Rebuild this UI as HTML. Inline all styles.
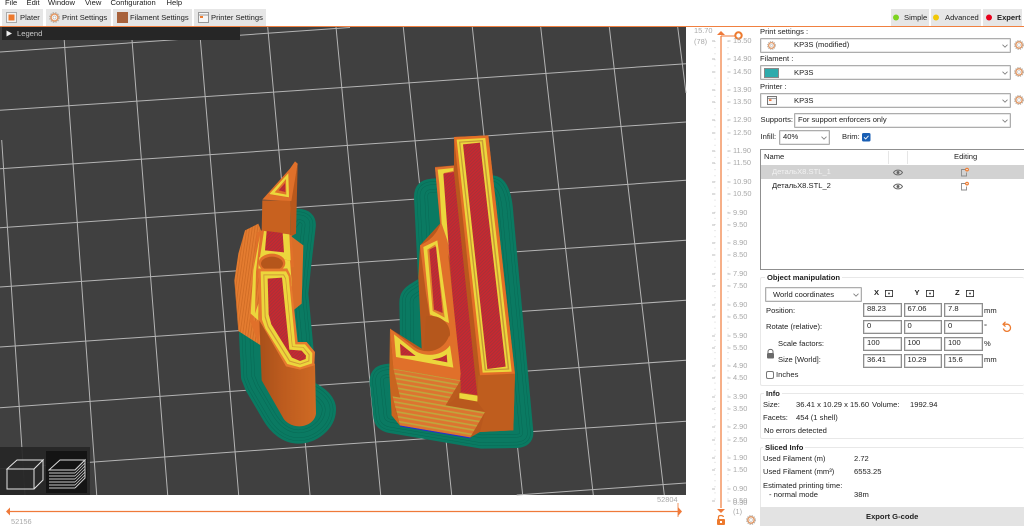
<!DOCTYPE html>
<html><head><meta charset="utf-8"><style>
html,body{margin:0;padding:0;background:#fff}
#r{position:relative;width:1024px;height:526px;overflow:hidden;background:#fff;font-family:"Liberation Sans","Noto Sans CJK SC",sans-serif;font-size:7.6px;color:#222;filter:blur(.3px)}
.t{position:absolute;height:10px;line-height:10px;white-space:nowrap}
.b{font-weight:bold}
.g{color:#a8a8a8;font-size:7.4px}
.box{position:absolute;background:#fff;border:1px solid #adadad;box-sizing:border-box;box-shadow:inset 0 0 0 .5px #d0d0d0;border-radius:1px}
.inp{position:absolute;background:#fff;border:1px solid #8e8e8e;box-sizing:border-box;height:14px;width:38.5px;line-height:10px;padding-left:3px;box-shadow:inset 0 0 0 .5px #bbb}
.tab{position:absolute;top:9px;height:17px;background:#e6e6e6}
.grp{position:absolute;border:1px solid #e8e8e8;border-right:0;box-sizing:border-box;border-radius:2px}
.ttl{position:absolute;background:#fff;height:10px;line-height:10px;padding:0 2px;font-weight:bold;white-space:nowrap}
svg{position:absolute;overflow:visible}
</style></head><body><div id="r">

<svg style="left:0;top:0;width:0;height:0"><defs>
<symbol id="gear" viewBox="0 0 10 10"><circle cx="5" cy="5" r="3.2" fill="#fff" stroke="#e59a66" stroke-width="1.5"/><circle cx="5" cy="5" r="4.3" fill="none" stroke="#b5b0aa" stroke-width="1.2" stroke-dasharray="1.3 1"/><circle cx="5" cy="5" r="1.4" fill="#fff" stroke="#aaa" stroke-width=".5"/></symbol>
<symbol id="chev" viewBox="0 0 6 4"><path d="M.5 .7L3 3.2L5.5 .7" fill="none" stroke="#7a7a7a" stroke-width=".8"/></symbol>
<symbol id="eye" viewBox="0 0 10 7"><path d="M.5 3.5C2.5 .3 7.5 .3 9.5 3.5C7.5 6.7 2.5 6.7 .5 3.5Z" fill="none" stroke="#666" stroke-width="1"/><circle cx="5" cy="3.5" r="1.5" fill="#666"/></symbol>
<symbol id="edit" viewBox="0 0 10 10"><path d="M6 2.5H1.5V9H6.5V5.5" fill="none" stroke="#8a8a8a" stroke-width=".9"/><circle cx="7" cy="2.6" r="1.9" fill="#ed7a2e"/><circle cx="7" cy="2.6" r=".7" fill="#fff"/></symbol>
<symbol id="cb" viewBox="0 0 8 7"><rect x=".5" y=".5" width="7" height="6" fill="none" stroke="#444" stroke-width=".9"/><path d="M0 2V0H2M6 0H8V2M8 5V7H6M2 7H0V5" fill="none" stroke="#222" stroke-width=".6"/><rect x="3.2" y="2.7" width="1.6" height="1.6" fill="#333"/></symbol>
<pattern id="hatch" width="7" height="7" patternUnits="userSpaceOnUse" patternTransform="rotate(-45)"><rect width="7" height="7" fill="#c9282f"/><rect width="7" height="2.8" fill="#a6323a"/></pattern>
<pattern id="stairs" width="10" height="14" patternUnits="userSpaceOnUse" patternTransform="rotate(10)"><rect width="10" height="14" fill="#dd7430"/><rect y="4" width="10" height="5" fill="#bfa63c"/></pattern>
<pattern id="steps" width="8" height="8" patternUnits="userSpaceOnUse" patternTransform="rotate(8)"><rect width="8" height="8" fill="#e47c30"/><rect width="2.5" height="8" fill="#cf6b24"/></pattern>
<linearGradient id="wall" x1="0" x2="1" y1="0" y2="0"><stop offset="0" stop-color="#a8501a"/><stop offset=".4" stop-color="#bc5b1e"/><stop offset="1" stop-color="#cf6a24"/></linearGradient>
<path id="b1" d="M890 570C915 570 925 580 922 600L908 720L900 800L915 960L923 1085C960 1100 985 1125 983 1150C981 1190 940 1225 895 1225C860 1225 830 1200 810 1165L760 1080L748 1050L742 920L800 700Z"/>
<path id="b2" d="M245 480C225 482 217 490 217 510L230 770L190 795C175 805 173 815 173 830L177 1030L115 1035C92 1037 83 1045 84 1065L95 1170C97 1182 105 1190 120 1193L395 1240L500 1238C518 1237 526 1230 525 1215L465 560C462 510 450 470 425 470Z"/>
</defs></svg>

<!-- menu -->
<div class="t" style="left:5px;top:-2px">File</div><div class="t" style="left:26.5px;top:-2px">Edit</div><div class="t" style="left:48px;top:-2px">Window</div><div class="t" style="left:85px;top:-2px">View</div><div class="t" style="left:110.5px;top:-2px">Configuration</div><div class="t" style="left:166.5px;top:-2px">Help</div>

<!-- tabs -->
<div class="tab" style="left:2px;width:41px"></div><div class="tab" style="left:46px;width:65px"></div><div class="tab" style="left:113px;width:79px"></div><div class="tab" style="left:194px;width:72px"></div>
<svg style="left:6px;top:12px" width="11" height="11"><rect x=".5" y=".5" width="10" height="10" fill="#f3f3f3" stroke="#aaa"/><rect x="2.5" y="2.5" width="6" height="6" fill="#ed7a2e"/></svg>
<svg style="left:49px;top:12px" width="11" height="11"><use href="#gear" width="11" height="11"/></svg>
<svg style="left:117px;top:12px" width="11" height="11"><rect width="11" height="11" fill="#a8623c"/></svg>
<svg style="left:198px;top:12px" width="11" height="11"><rect x=".5" y=".5" width="10" height="10" fill="#f6f6f6" stroke="#999"/><path d="M.5 3H10.5" stroke="#999"/><rect x="2" y="4" width="3" height="2" fill="#ed7a2e"/></svg>
<div class="t" style="left:20px;top:13px">Plater</div><div class="t" style="left:62px;top:13px">Print Settings</div><div class="t" style="left:130px;top:13px">Filament Settings</div><div class="t" style="left:211px;top:13px">Printer Settings</div>

<div class="tab" style="left:891px;width:38px"></div><div class="tab" style="left:931px;width:50px"></div><div class="tab" style="left:983px;width:39px"></div>
<svg style="left:892px;top:13px" width="130" height="10"><circle cx="4" cy="4.5" r="3" fill="#7ed321"/><circle cx="44" cy="4.5" r="3" fill="#f0c808"/><circle cx="97" cy="4.5" r="3" fill="#e8001c"/></svg>
<div class="t" style="left:904px;top:13px">Simple</div><div class="t" style="left:945px;top:13px">Advanced</div><div class="t b" style="left:997px;top:13px">Expert</div>
<div style="position:absolute;left:0;top:26px;width:1024px;height:1px;background:#f08040"></div>

<!-- 3D view -->
<svg style="left:0;top:27px" width="686" height="468" viewBox="0 27 686 468">
<rect x="0" y="27" width="686" height="468" fill="#404040"/>
<g stroke="#b4b4b4" stroke-width="1" fill="none">
<path d="M0 52L350 27.5M0 110.3L350 87L686 63.7M0 168.7L350 145.3L686 122M0 227.7L350 203.7L686 180.3M0 287L350 263L686 240.3M0 347L350 323L686 300.3M0 407.7L350 383L686 360.3M0 468.7L350 443.7L686 421.3M516.7 495L686 483"/>
<path d="M1.7 140L25 495M63.3 27L96.7 495M131 27L167.7 495M199.3 27L238.7 495M267.7 27L310 495M336 27L380.7 495M403.3 27L451.7 495M472.3 27L522.7 495M540.7 27L593.3 495M609.3 27L664.3 495M677.7 27L686 93"/>
</g>
<!-- LEFT OBJECT -->
<g transform="translate(0,27) scale(.33333)">
<g stroke-linejoin="round">
<use href="#b1" fill="#0a7a62" stroke="#0a7a62" stroke-width="50"/>
<use href="#b1" stroke="#086a55" stroke-width="34" fill="none"/><use href="#b1" stroke="#0a7a62" stroke-width="31" fill="none"/>
<use href="#b1" stroke="#086a55" stroke-width="16" fill="none"/><use href="#b1" stroke="#0a7a62" stroke-width="13" fill="none"/>
</g>
<path d="M735 610L775 590L795 640L782 955L715 912L703 760L715 680Z" fill="url(#steps)"/>
<path d="M870 625L910 655L905 830L880 850L860 800Z" fill="#d96f28"/>
<path d="M787 520L872 520L870 630L785 612Z" fill="#c8611f"/>
<path d="M872 520L893 410L888 620L870 630Z" fill="#b9581c"/>
<path d="M787 518L870 425L885 403L893 410L874 522Z" fill="#e0702a"/>
<path d="M806 502L866 436L868 512Z" fill="#ecd63c" stroke="#d96b28" stroke-width="2"/>
<path d="M824 496L858 456L859 503Z" fill="#e0702a"/>
<path d="M836 490L855 468L856 495Z" fill="url(#hatch)"/>
<!-- mid face -->
<path d="M770 618L785 610L875 625L882 720L775 740L760 880L775 885L785 880L775 950L750 880Z" fill="#e0702a"/>
<path d="M780 625L760 730L752 860L775 880L775 830L765 860L768 735Z" fill="#ecd63c"/>
<path d="M792 612L868 622L872 700L780 690Z" fill="#ecd63c"/>
<path d="M800 612L848 618L852 676L795 670Z" fill="url(#hatch)"/>
<path d="M778 690L870 700L876 780L868 760L862 725L775 725Z" fill="#ecd63c"/>
<ellipse cx="816" cy="708" rx="40" ry="28" fill="#e0702a"/><ellipse cx="816" cy="710" rx="33" ry="21" fill="#b5561b"/>
<!-- front wall -->
<path d="M778 880L860 1015L945 1010L948 1160C945 1185 920 1198 898 1198C875 1198 855 1185 848 1170L785 1060Z" fill="url(#wall)"/>
<path d="M775 725L862 725L872 745L893 945L920 945L945 975L943 1015L900 1028L858 1018L778 880Z" fill="#e67a2e"/>
<path d="M782 733L858 733L866 748L886 952L915 952L937 978L936 1009L900 1021L862 1011L796 905L786 878Z" fill="#ecd63c"/>
<path d="M790 742L852 742L858 754L878 958L910 960L929 982L928 1003L900 1013L868 1004L803 900L794 870Z" fill="#d29a35"/>
<path d="M793 745L850 745L856 756L876 960L909 962L926 984L925 1001L900 1010L870 1001L806 898L797 868Z" fill="#ecd63c"/>
<path d="M803 755L846 752L868 968L905 971L918 986L917 996L900 1002L876 992L814 892L806 862Z" fill="url(#hatch)"/>
</g>
<!-- RIGHT OBJECT -->
<g transform="translate(350,27) scale(.33333)">
<g stroke-linejoin="round">
<use href="#b2" fill="#0a7a62" stroke="#0a7a62" stroke-width="50"/>
<use href="#b2" stroke="#086a55" stroke-width="34" fill="none"/><use href="#b2" stroke="#0a7a62" stroke-width="31" fill="none"/>
<use href="#b2" stroke="#086a55" stroke-width="16" fill="none"/><use href="#b2" stroke="#0a7a62" stroke-width="13" fill="none"/>
</g>
<path d="M120 905L215 965L205 750L210 655L270 590L255 420L312 415L312 330L415 325L495 1040L490 1210L390 1215L360 1232L150 1195L125 1165Z" fill="#b9581d"/>
<!-- second wall -->
<path d="M255 422L312 416L312 560L385 1105L330 1095L300 700L272 600Z" fill="#dd7030"/>
<path d="M263 428L310 423V432L282 438L298 668L292 640L275 590L268 470Z" fill="#ecd63c"/>
<path d="M280 440L312 435L385 1105L330 1095L296 660Z" fill="url(#hatch)"/>
<path d="M328 1098L382 1106L384 1124L328 1114Z" fill="#ecd63c"/>
<path d="M312 330L392 1045L382 1105L312 435Z" fill="#b9581d"/>
<!-- tall top -->
<path d="M312 330L415 325L495 1042L390 1045Z" fill="#e36f27"/>
<path d="M320 338L406 333L485 1034L398 1037Z" fill="#ecd63c"/>
<path d="M327 344L399 339L478 1028L404 1031Z" fill="#c89a35"/>
<path d="M331 347L395 343L473 1024L408 1028Z" fill="#ecd63c"/>
<path d="M339 352L390 347L467 1019L412 1026Z" fill="url(#hatch)"/>
<!-- lower right wall -->
<path d="M385 1045L495 1040L490 1210L390 1215L405 1155L382 1125Z" fill="#bf5d1e"/>
<!-- small tower -->
<path d="M210 655C245 640 262 615 272 590L290 640L332 1040L300 1030L295 900L240 870L228 800Z" fill="#e0702a"/>
<path d="M220 660L262 640L297 888L240 862Z" fill="#ecd63c"/>
<path d="M232 668L256 652L284 872L248 852Z" fill="#e0802e"/>
<path d="M238 668L258 658L278 858L252 848Z" fill="url(#hatch)"/>
<path d="M228 868C265 860 302 885 300 925C298 960 260 980 222 970Z" fill="#b5571c"/>
<!-- lower face -->
<path d="M120 905L190 958C225 985 280 975 298 925L332 1040L330 1060L130 1025Z" fill="#e0702a"/>
<path d="M132 922L190 968C225 995 280 985 300 955L310 1022L138 990Z" fill="#ecd63c"/>
<path d="M150 950L197 987L152 985Z" fill="url(#hatch)"/>
<path d="M245 997C265 995 280 990 290 982L292 1006Z" fill="url(#hatch)"/>
<!-- stairs -->
<path d="M120 905L130 1025L152 1118L125 1165L118 1040Z" fill="#c9651f"/>
<path d="M130 1025L332 1060L285 1138L152 1118Z" fill="url(#stairs)"/>
<path d="M285 1138L332 1060V1095L310 1120Z" fill="#bb5b1e"/>
<path d="M150 1116L285 1138" stroke="#2b2bd0" stroke-width="3"/>
<path d="M128 1108L405 1155L360 1232L150 1196Z" fill="url(#stairs)"/>
<path d="M150 1197L362 1233" stroke="#2b2bd0" stroke-width="3"/>
<path d="M125 1110L150 1196L125 1165Z" fill="#c9651f"/>
</g>
<!-- view-mode thumbs -->
<rect x="0" y="447" width="90" height="48" fill="#262626" fill-opacity=".92"/>
<rect x="46" y="451" width="41" height="42" fill="#141414"/>
<path d="M7 469L17 460H43L34 469ZM7 469H34V489H7ZM34 469L43 460V480L34 489" fill="#2a2a2a" fill-opacity=".6" stroke="#e4e4e4" stroke-width="1"/>
<path d="M49 470L60 460H85L75 470Z" fill="none" stroke="#ddd" stroke-width=".9"/>
<path d="M49 473H75M49 476H75M49 479H75M49 482H75M49 485H75M49 488H75" stroke="#c9c9c9" stroke-width="1.1"/>
<path d="M75 470L85 460V478L75 488" fill="none" stroke="#ccc" stroke-width="1" />
<path d="M75 473L85 463M75 476L85 466M75 479L85 469M75 482L85 472M75 485L85 475" stroke="#ccc" stroke-width=".8"/>
</svg>
<!-- legend -->
<div style="position:absolute;left:2px;top:27px;width:238px;height:13px;background:#262626"></div>
<svg style="left:6px;top:30px" width="7" height="7"><path d="M.5 .5L6 3.5L.5 6.5Z" fill="#eee"/></svg>
<div class="t" style="left:17px;top:29px;color:#c9c9c9">Legend</div>

<!-- vertical slider -->
<svg style="left:686px;top:27px;width:74px;height:499px" viewBox="686 27 74 499">
<path d="M715 41V501M728 41V501" stroke="#d4d4d4" stroke-width="1" stroke-dasharray="1 5.1"/>
<path d="M712 41h3M712 59h3M712 72h3M712 90h3M712 102h3M712 120h3M712 133h3M712 151h3M712 163h3M712 182h3M712 194h3M712 213h3M712 225h3M712 243h3M712 255h3M712 274h3M712 286h3M712 305h3M712 317h3M712 336h3M712 348h3M712 366h3M712 378h3M712 397h3M712 409h3M712 427h3M712 440h3M712 458h3M712 470h3M712 489h3M712 501h3" stroke="#bdbdbd" stroke-width=".9"/>
<path d="M727.5 41h3M727.5 59h3M727.5 72h3M727.5 90h3M727.5 102h3M727.5 120h3M727.5 133h3M727.5 151h3M727.5 163h3M727.5 182h3M727.5 194h3M727.5 213h3M727.5 225h3M727.5 243h3M727.5 255h3M727.5 274h3M727.5 286h3M727.5 305h3M727.5 317h3M727.5 336h3M727.5 348h3M727.5 366h3M727.5 378h3M727.5 397h3M727.5 409h3M727.5 427h3M727.5 440h3M727.5 458h3M727.5 470h3M727.5 489h3M727.5 501h3" stroke="#bdbdbd" stroke-width=".9"/>
<path d="M721 36V508" stroke="#ef7a3a" stroke-width="1.2"/>
<path d="M717 35L721 31L725 35Z" fill="#ef7a3a"/><path d="M721 36H738" stroke="#ef7a3a" stroke-width="1"/>
<circle cx="738.5" cy="35.5" r="3.2" fill="#fff" stroke="#ed7a2e" stroke-width="2"/>
<path d="M717 509H725L721 513Z" fill="#ef7a3a"/>
<rect x="717" y="519" width="8" height="6" rx="1" fill="#ed7a2e"/><path d="M718.5 519V517C718.5 515 723 515 723.5 517" fill="none" stroke="#ed7a2e" stroke-width="1.3"/>
<rect x="720" y="521" width="2" height="2" fill="#fff"/>
</svg>
<svg style="left:746px;top:515px" width="10" height="10"><use href="#gear" width="10" height="10"/></svg>
<div class="t g" style="left:694px;top:26px">15.70</div><div class="t g" style="left:694px;top:37px">(78)</div>
<div class="t g" style="left:733px;top:36px">15.50</div><div class="t g" style="left:733px;top:54px">14.90</div><div class="t g" style="left:733px;top:67px">14.50</div><div class="t g" style="left:733px;top:85px">13.90</div><div class="t g" style="left:733px;top:97px">13.50</div><div class="t g" style="left:733px;top:115px">12.90</div><div class="t g" style="left:733px;top:128px">12.50</div><div class="t g" style="left:733px;top:146px">11.90</div><div class="t g" style="left:733px;top:158px">11.50</div><div class="t g" style="left:733px;top:177px">10.90</div><div class="t g" style="left:733px;top:189px">10.50</div><div class="t g" style="left:733px;top:208px">9.90</div><div class="t g" style="left:733px;top:220px">9.50</div><div class="t g" style="left:733px;top:238px">8.90</div><div class="t g" style="left:733px;top:250px">8.50</div><div class="t g" style="left:733px;top:269px">7.90</div><div class="t g" style="left:733px;top:281px">7.50</div><div class="t g" style="left:733px;top:300px">6.90</div><div class="t g" style="left:733px;top:312px">6.50</div><div class="t g" style="left:733px;top:331px">5.90</div><div class="t g" style="left:733px;top:343px">5.50</div><div class="t g" style="left:733px;top:361px">4.90</div><div class="t g" style="left:733px;top:373px">4.50</div><div class="t g" style="left:733px;top:392px">3.90</div><div class="t g" style="left:733px;top:404px">3.50</div><div class="t g" style="left:733px;top:422px">2.90</div><div class="t g" style="left:733px;top:435px">2.50</div><div class="t g" style="left:733px;top:453px">1.90</div><div class="t g" style="left:733px;top:465px">1.50</div><div class="t g" style="left:733px;top:484px">0.90</div><div class="t g" style="left:733px;top:496px">0.50</div><div class="t g" style="left:733px;top:498px">0.30</div><div class="t g" style="left:733px;top:507px">(1)</div>

<!-- bottom slider -->
<svg style="left:0;top:495px" width="690" height="31"><path d="M9 16.5H680" stroke="#ef7a3a" stroke-width="1.2"/><path d="M10 12.5V20.5L6 16.5Z" fill="#ef7a3a"/><path d="M678 12V21L682 16.5Z" fill="#ef7a3a"/><path d="M678 8V22" stroke="#ef7a3a" stroke-width=".8"/></svg>
<div class="t g" style="left:11px;top:517px">52156</div><div class="t g" style="left:657px;top:495px">52804</div>

<!-- presets -->
<div class="t" style="left:760px;top:27px">Print settings :</div>
<div class="box" style="left:760px;top:38px;width:251px;height:15px"></div>
<svg style="left:767px;top:41px" width="9" height="9"><use href="#gear" width="9" height="9"/></svg>
<div class="t" style="left:794px;top:40px">KP3S (modified)</div>
<svg style="left:1002px;top:44px" width="6" height="4"><use href="#chev" width="6" height="4"/></svg>
<svg style="left:1014px;top:40px" width="10" height="10"><use href="#gear" width="10" height="10"/></svg>

<div class="t" style="left:760px;top:54px">Filament :</div>
<div class="box" style="left:760px;top:65px;width:251px;height:15px"></div>
<div style="position:absolute;left:764px;top:68px;width:15px;height:10px;background:#2eabac;border:.5px solid #888;box-sizing:border-box"></div>
<div class="t" style="left:794px;top:67.5px">KP3S</div>
<svg style="left:1002px;top:71px" width="6" height="4"><use href="#chev" width="6" height="4"/></svg>
<svg style="left:1014px;top:67px" width="10" height="10"><use href="#gear" width="10" height="10"/></svg>

<div class="t" style="left:760px;top:82px">Printer :</div>
<div class="box" style="left:760px;top:93px;width:251px;height:15px"></div>
<svg style="left:767px;top:96px" width="10" height="9"><rect x=".5" y=".5" width="9" height="8" fill="#f6f6f6" stroke="#777"/><path d="M.5 2.5H9.5" stroke="#777" stroke-width=".7"/><rect x="2" y="3.3" width="2.5" height="1.6" fill="#ed6a2e"/></svg>
<div class="t" style="left:794px;top:95.5px">KP3S</div>
<svg style="left:1002px;top:99px" width="6" height="4"><use href="#chev" width="6" height="4"/></svg>
<svg style="left:1014px;top:95px" width="10" height="10"><use href="#gear" width="10" height="10"/></svg>

<div class="t" style="left:760.5px;top:115px">Supports:</div>
<div class="box" style="left:794px;top:113px;width:217px;height:15px"></div>
<div class="t" style="left:798px;top:115px">For support enforcers only</div>
<svg style="left:1002px;top:119px" width="6" height="4"><use href="#chev" width="6" height="4"/></svg>

<div class="t" style="left:760.5px;top:132px">Infill:</div>
<div class="box" style="left:779px;top:130px;width:51px;height:15px"></div>
<div class="t" style="left:783px;top:132px">40%</div>
<svg style="left:821px;top:136px" width="6" height="4"><use href="#chev" width="6" height="4"/></svg>
<div class="t" style="left:842px;top:132px">Brim:</div>
<svg style="left:862px;top:133px" width="9" height="9"><rect width="8.5" height="8.5" rx="1.5" fill="#1a5fb4"/><path d="M2 4.3L3.7 6L6.5 2.8" fill="none" stroke="#fff" stroke-width=".9"/></svg>

<!-- list -->
<div style="position:absolute;left:760px;top:149px;width:264px;height:120.5px;border:1px solid #8f8f8f;border-right:0;box-sizing:border-box"></div>
<div class="t" style="left:764px;top:152px">Name</div>
<div style="position:absolute;left:888px;top:151px;width:1px;height:13px;background:#e6e6e6"></div><div style="position:absolute;left:907px;top:151px;width:1px;height:13px;background:#e6e6e6"></div>
<div class="t" style="left:954px;top:152px">Editing</div>
<div style="position:absolute;left:761px;top:165px;width:263px;height:14px;background:#d2d2d2"></div>
<div class="t" style="left:772px;top:167px;color:#f2f2f2">ДетальX8.STL_1</div>
<div class="t" style="left:772px;top:181px">ДетальX8.STL_2</div>
<svg style="left:893px;top:169px" width="10" height="7"><use href="#eye" width="10" height="7"/></svg>
<svg style="left:893px;top:183px" width="10" height="7"><use href="#eye" width="10" height="7"/></svg>
<svg style="left:960px;top:167px" width="10" height="10"><use href="#edit" width="10" height="10"/></svg>
<svg style="left:960px;top:181px" width="10" height="10"><use href="#edit" width="10" height="10"/></svg>

<!-- object manipulation -->
<div class="grp" style="left:760px;top:277px;width:264px;height:109px"></div>
<div class="ttl" style="left:765px;top:273px">Object manipulation</div>
<div class="box" style="left:765px;top:287px;width:97px;height:15px"></div>
<div class="t" style="left:773px;top:289.5px">World coordinates</div>
<svg style="left:853px;top:293px" width="6" height="4"><use href="#chev" width="6" height="4"/></svg>
<div class="t b" style="left:874px;top:288px">X</div><div class="t b" style="left:914.5px;top:288px">Y</div><div class="t b" style="left:955px;top:288px">Z</div>
<svg style="left:885px;top:290px" width="8" height="7"><use href="#cb" width="8" height="7"/></svg>
<svg style="left:925.5px;top:290px" width="8" height="7"><use href="#cb" width="8" height="7"/></svg>
<svg style="left:966px;top:290px" width="8" height="7"><use href="#cb" width="8" height="7"/></svg>

<div class="t" style="left:766px;top:306px">Position:</div>
<div class="inp" style="left:863px;top:303px">88.23</div><div class="inp" style="left:903.5px;top:303px">67.06</div><div class="inp" style="left:944px;top:303px">7.8</div>
<div class="t" style="left:984px;top:306px">mm</div>
<div class="t" style="left:766px;top:322px">Rotate (relative):</div>
<div class="inp" style="left:863px;top:320px">0</div><div class="inp" style="left:903.5px;top:320px">0</div><div class="inp" style="left:944px;top:320px">0</div>
<div class="t" style="left:984px;top:322px">°</div>
<svg style="left:1001px;top:321px" width="11" height="12"><path d="M3 3.2H6.2A3.6 3.6 0 1 1 2.4 7.5" fill="none" stroke="#ed7a2e" stroke-width="1.3"/><path d="M4.5 .8L2 3.2L4.5 5.6" fill="none" stroke="#ed7a2e" stroke-width="1.2"/></svg>
<div class="t" style="left:778px;top:339px">Scale factors:</div>
<div class="inp" style="left:863px;top:337px">100</div><div class="inp" style="left:903.5px;top:337px">100</div><div class="inp" style="left:944px;top:337px">100</div>
<div class="t" style="left:984px;top:339px">%</div>
<svg style="left:766px;top:348px" width="9" height="11"><path d="M2 5V3.5C2 .6 7 .6 7 3.5V5" fill="none" stroke="#6a6a6a" stroke-width="1"/><rect x="1" y="5" width="7" height="5.5" rx="1" fill="#6a6a6a"/></svg>
<div class="t" style="left:778px;top:355px">Size [World]:</div>
<div class="inp" style="left:863px;top:354px">36.41</div><div class="inp" style="left:903.5px;top:354px">10.29</div><div class="inp" style="left:944px;top:354px">15.6</div>
<div class="t" style="left:984px;top:355px">mm</div>
<div style="position:absolute;left:766px;top:371px;width:8px;height:8px;border:1px solid #777;border-radius:2px;box-sizing:border-box;background:#fff"></div>
<div class="t" style="left:776px;top:370px">Inches</div>

<!-- info -->
<div class="grp" style="left:760px;top:393px;width:264px;height:45.5px"></div>
<div class="ttl" style="left:764px;top:389px">Info</div>
<div class="t" style="left:763px;top:400px">Size:</div><div class="t" style="left:796px;top:400px">36.41 x 10.29 x 15.60</div><div class="t" style="left:872px;top:400px">Volume:</div><div class="t" style="left:910px;top:400px">1992.94</div>
<div class="t" style="left:763px;top:413px">Facets:</div><div class="t" style="left:796px;top:413px">454 (1 shell)</div>
<div class="t" style="left:764px;top:426px">No errors detected</div>

<div class="grp" style="left:760px;top:447px;width:264px;height:62px"></div>
<div class="ttl" style="left:763px;top:443px">Sliced Info</div>
<div class="t" style="left:763px;top:454px">Used Filament (m)</div><div class="t" style="left:854px;top:454px">2.72</div>
<div class="t" style="left:763px;top:467px">Used Filament (mm³)</div><div class="t" style="left:854px;top:467px">6553.25</div>
<div class="t" style="left:763px;top:480.5px">Estimated printing time:</div>
<div class="t" style="left:769px;top:490px">- normal mode</div><div class="t" style="left:854px;top:490px">38m</div>

<div style="position:absolute;left:760px;top:507px;width:264px;height:19px;background:#e3e3e3"></div>
<div class="t b" style="left:866px;top:512px">Export G-code</div>
</div></body></html>
